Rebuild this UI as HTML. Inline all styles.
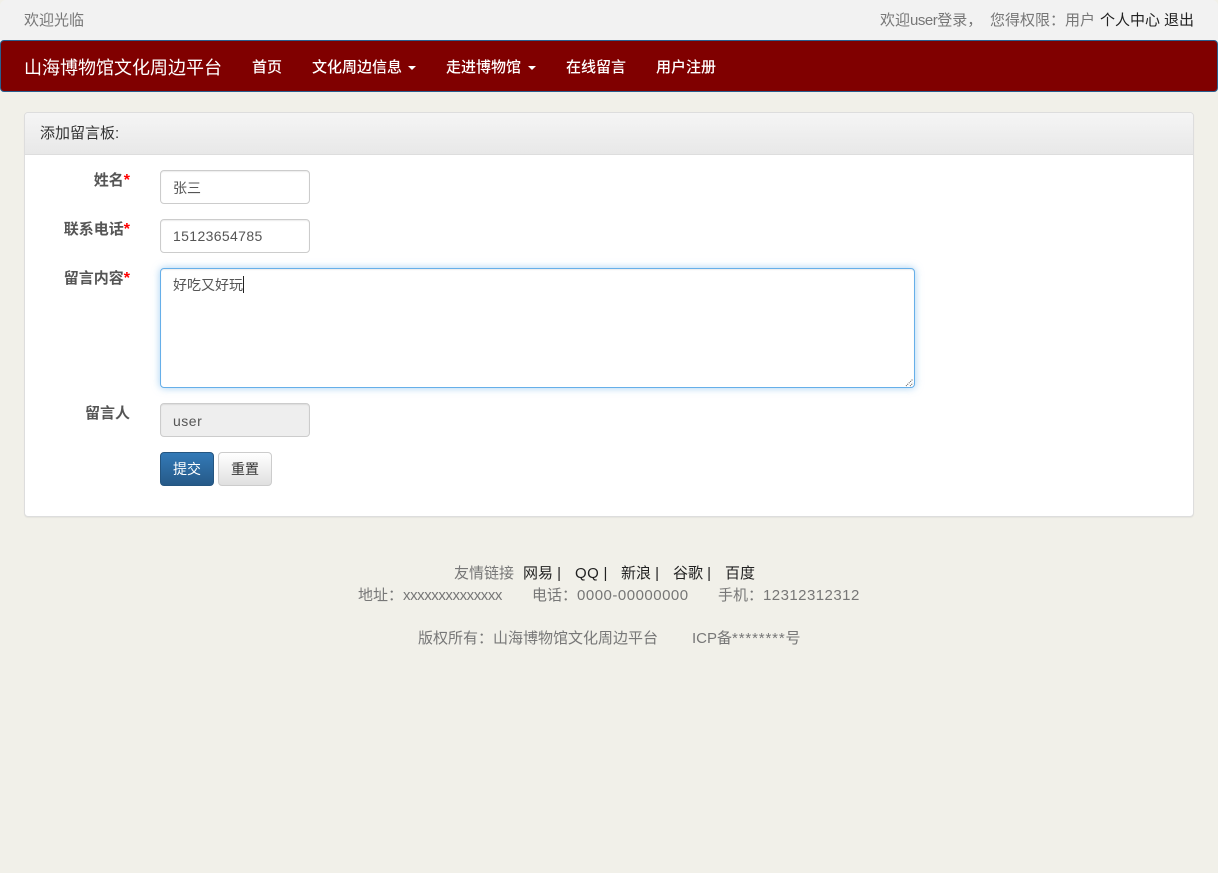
<!DOCTYPE html>
<html lang="zh-CN">
<head>
<meta charset="utf-8">
<title>添加留言板</title>
<style>
*{box-sizing:border-box;margin:0;padding:0}
html,body{width:1218px;height:873px;overflow:hidden}
body{background:#f1f0e9;position:relative;font-family:"Liberation Sans","Noto Sans CJK SC",sans-serif;font-size:15px;color:#777}
.t{position:absolute;white-space:nowrap;line-height:20px}
.k{color:#222}
#top{position:absolute;left:0;top:0;width:1218px;height:41px;background:#f2f2f2;border-radius:6px 6px 0 0}
#nav{position:absolute;left:0;top:40px;width:1218px;height:52px;background:#800000;border:1px solid #2a5f8f;border-radius:4px}
.n{color:#fff;font-size:15px;font-weight:500}
.caret{position:absolute;width:0;height:0;border-top:4px solid #fff;border-left:4px solid transparent;border-right:4px solid transparent;top:66px}
#panel{position:absolute;left:24px;top:112px;width:1170px;height:405px;background:#fff;border:1px solid #ddd;border-radius:4px;box-shadow:0 1px 1px rgba(0,0,0,.05)}
#head{position:absolute;left:0;top:0;width:1168px;height:42px;background:linear-gradient(#f5f5f5,#e8e8e8);border-bottom:1px solid #ddd;border-radius:3px 3px 0 0}
.l{font-size:15px;font-weight:700;color:#555;text-align:right}
.l b{color:#f00;font-size:16px}
.i{position:absolute;left:160px;width:150px;height:34px;background:#fff;border:1px solid #ccc;border-radius:4px;box-shadow:inset 0 1px 1px rgba(0,0,0,.075);font-size:14px;color:#555;padding:6px 12px;line-height:20px;white-space:nowrap}
#ta{position:absolute;left:160px;top:268px;width:755px;height:120px;background:#fff;border:1px solid #66afe9;border-radius:4px;box-shadow:inset 0 1px 1px rgba(0,0,0,.075),0 0 8px rgba(102,175,233,.6);font-size:14px;color:#555;padding:6px 12px;line-height:20px}
#caretbar{position:absolute;left:243px;top:276px;width:1px;height:17px;background:#222}
.b{position:absolute;top:452px;width:54px;height:34px;border-radius:4px;font-size:14px;line-height:32px;text-align:center}
#b1{left:160px;background:linear-gradient(#337ab7,#265a88);border:1px solid #245580;color:#fff}
#b2{left:218px;background:linear-gradient(#fff,#e0e0e0);border:1px solid #ccc;color:#333}
</style>
</head>
<body>
<div id="top"></div>
<div class="t" style="left:24px;top:11px;">欢迎光临</div>
<div class="t" style="left:880px;top:11px;">欢迎<span style="letter-spacing:-.5px">user</span>登录，</div>
<div class="t" style="left:990px;top:11px;">您得权限：用户</div>
<div class="t k" style="left:1100px;top:11px;">个人中心</div>
<div class="t k" style="left:1164px;top:11px;">退出</div>

<div id="nav"></div>
<div class="t" style="left:24px;top:57px;color:#fff;font-size:18px;line-height:22px;">山海博物馆文化周边平台</div>
<div class="t n" style="left:252px;top:58px;">首页</div>
<div class="t n" style="left:312px;top:58px;">文化周边信息</div>
<div class="caret" style="left:408px;"></div>
<div class="t n" style="left:446px;top:58px;">走进博物馆</div>
<div class="caret" style="left:528px;"></div>
<div class="t n" style="left:566px;top:58px;">在线留言</div>
<div class="t n" style="left:656px;top:58px;">用户注册</div>

<div id="panel"><div id="head"></div></div>
<div class="t" style="left:40px;top:124px;font-size:15px;color:#333;">添加留言板:</div>

<div class="t l" style="right:1088px;top:171px;">姓名<b>*</b></div>
<div class="i" style="top:170px;padding-top:7px;">张三</div>
<div class="t l" style="right:1088px;top:220px;">联系电话<b>*</b></div>
<div class="i" style="top:219px;letter-spacing:.36px;">15123654785</div>
<div class="t l" style="right:1088px;top:269px;">留言内容<b>*</b></div>
<div id="ta">好吃又好玩</div>
<div id="caretbar"></div>
<svg style="position:absolute;left:905px;top:378px" width="9" height="9" viewBox="0 0 9 9"><path d="M1 8 8 1M5 8 8 5" stroke="#555" stroke-width="1" stroke-dasharray="1 1" fill="none"/></svg>
<div class="t l" style="right:1088px;top:404px;">留言人</div>
<div class="i" style="top:403px;background:#eee;padding-top:7px;letter-spacing:.5px;">user</div>
<div class="b" id="b1">提交</div>
<div class="b" id="b2">重置</div>

<div class="t" style="left:454px;top:564px;">友情链接</div>
<div class="t k" style="left:523px;top:564px;">网易 |</div>
<div class="t k" style="left:575px;top:564px;"><span style="letter-spacing:.5px">QQ</span> |</div>
<div class="t k" style="left:621px;top:564px;">新浪 |</div>
<div class="t k" style="left:673px;top:564px;">谷歌 |</div>
<div class="t k" style="left:725px;top:564px;">百度</div>
<div class="t" style="left:358px;top:586px;">地址：<span style="letter-spacing:-.43px">xxxxxxxxxxxxxx</span></div>
<div class="t" style="left:532px;top:586px;">电话：<span style="letter-spacing:.5px">0000-00000000</span></div>
<div class="t" style="left:718px;top:586px;">手机：<span style="letter-spacing:.45px">12312312312</span></div>
<div class="t" style="left:418px;top:629px;">版权所有：山海博物馆文化周边平台</div>
<div class="t" style="left:692px;top:629px;">ICP备<span style="letter-spacing:.85px">********</span>号</div>
</body>
</html>
